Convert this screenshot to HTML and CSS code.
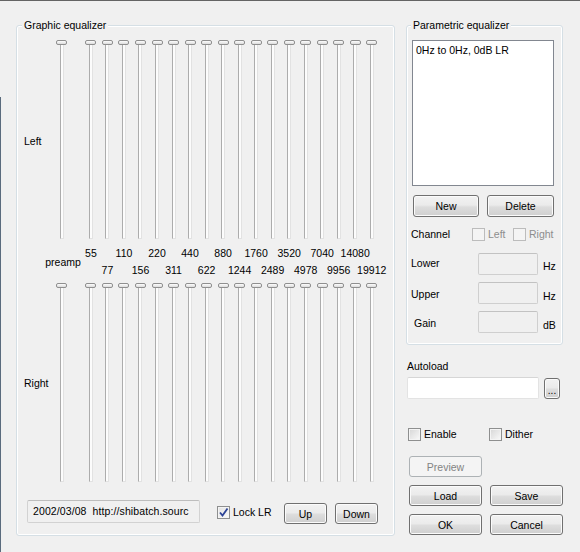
FILE: index.html
```html
<!DOCTYPE html>
<html>
<head>
<meta charset="utf-8">
<link rel="stylesheet" href="styles.css">
</head>
<body>
<div class="main">
  <section class="group geq">
    <span class="group-title">Graphic equalizer</span>
    <div class="eq">
      <div class="side top">Left</div>
      <div class="slider pre"><i class="thumb"></i><i class="track"></i></div>
      <div class="slider"><i class="thumb"></i><i class="track"></i></div>
      <div class="slider"><i class="thumb"></i><i class="track"></i></div>
      <div class="slider"><i class="thumb"></i><i class="track"></i></div>
      <div class="slider"><i class="thumb"></i><i class="track"></i></div>
      <div class="slider"><i class="thumb"></i><i class="track"></i></div>
      <div class="slider"><i class="thumb"></i><i class="track"></i></div>
      <div class="slider"><i class="thumb"></i><i class="track"></i></div>
      <div class="slider"><i class="thumb"></i><i class="track"></i></div>
      <div class="slider"><i class="thumb"></i><i class="track"></i></div>
      <div class="slider"><i class="thumb"></i><i class="track"></i></div>
      <div class="slider"><i class="thumb"></i><i class="track"></i></div>
      <div class="slider"><i class="thumb"></i><i class="track"></i></div>
      <div class="slider"><i class="thumb"></i><i class="track"></i></div>
      <div class="slider"><i class="thumb"></i><i class="track"></i></div>
      <div class="slider"><i class="thumb"></i><i class="track"></i></div>
      <div class="slider"><i class="thumb"></i><i class="track"></i></div>
      <div class="slider"><i class="thumb"></i><i class="track"></i></div>
      <div class="slider"><i class="thumb"></i><i class="track"></i></div>

      <div></div>
      <div class="flab pre">preamp</div>
      <div class="flab">55</div>
      <div class="flab lo">77</div>
      <div class="flab">110</div>
      <div class="flab lo">156</div>
      <div class="flab">220</div>
      <div class="flab lo">311</div>
      <div class="flab">440</div>
      <div class="flab lo">622</div>
      <div class="flab">880</div>
      <div class="flab lo">1244</div>
      <div class="flab">1760</div>
      <div class="flab lo">2489</div>
      <div class="flab">3520</div>
      <div class="flab lo">4978</div>
      <div class="flab">7040</div>
      <div class="flab lo">9956</div>
      <div class="flab">14080</div>
      <div class="flab lo">19912</div>

      <div class="side">Right</div>
      <div class="slider pre"><i class="thumb"></i><i class="track"></i></div>
      <div class="slider"><i class="thumb"></i><i class="track"></i></div>
      <div class="slider"><i class="thumb"></i><i class="track"></i></div>
      <div class="slider"><i class="thumb"></i><i class="track"></i></div>
      <div class="slider"><i class="thumb"></i><i class="track"></i></div>
      <div class="slider"><i class="thumb"></i><i class="track"></i></div>
      <div class="slider"><i class="thumb"></i><i class="track"></i></div>
      <div class="slider"><i class="thumb"></i><i class="track"></i></div>
      <div class="slider"><i class="thumb"></i><i class="track"></i></div>
      <div class="slider"><i class="thumb"></i><i class="track"></i></div>
      <div class="slider"><i class="thumb"></i><i class="track"></i></div>
      <div class="slider"><i class="thumb"></i><i class="track"></i></div>
      <div class="slider"><i class="thumb"></i><i class="track"></i></div>
      <div class="slider"><i class="thumb"></i><i class="track"></i></div>
      <div class="slider"><i class="thumb"></i><i class="track"></i></div>
      <div class="slider"><i class="thumb"></i><i class="track"></i></div>
      <div class="slider"><i class="thumb"></i><i class="track"></i></div>
      <div class="slider"><i class="thumb"></i><i class="track"></i></div>
      <div class="slider"><i class="thumb"></i><i class="track"></i></div>
    </div>
    <div class="eq-bottom">
      <div class="ro">2002/03/08  http://shibatch.sourc</div>
      <label class="chk lock"><span class="box checked"><svg width="11" height="11" viewBox="0 0 11 11"><path d="M2 5.5 L4.5 8.5 L9.5 1.5" fill="none" stroke="#2c4396" stroke-width="1.8"/></svg></span><span>Lock LR</span></label>
      <button class="btn ud">Up</button>
      <button class="btn ud down">Down</button>
    </div>
  </section>

  <div class="right">
    <section class="group peq">
      <span class="group-title">Parametric equalizer</span>
      <div class="list">0Hz to 0Hz, 0dB LR</div>
      <div class="btnrow">
        <button class="btn new">New</button>
        <button class="btn del">Delete</button>
      </div>
      <div class="chanrow">
        <span class="plabel chan">Channel</span>
        <label class="chk dis lchk"><span class="box"></span><span>Left</span></label>
        <label class="chk dis"><span class="box"></span><span>Right</span></label>
      </div>
      <div class="prow first">
        <span class="plabel p3">Lower</span>
        <span class="edit dis"></span>
        <span class="unit u6">Hz</span>
      </div>
      <div class="prow">
        <span class="plabel p5">Upper</span>
        <span class="edit dis"></span>
        <span class="unit u7">Hz</span>
      </div>
      <div class="prow">
        <span class="plabel p5 gain">Gain</span>
        <span class="edit dis"></span>
        <span class="unit u7">dB</span>
      </div>
    </section>

    <div class="autolabel">Autoload</div>
    <div class="autorow">
      <span class="edit wide"></span>
      <button class="btn dots">...</button>
    </div>
    <div class="optrow">
      <label class="chk enable"><span class="box"></span><span>Enable</span></label>
      <label class="chk"><span class="box"></span><span>Dither</span></label>
    </div>
    <div class="brow first"><button class="btn big disabled">Preview</button></div>
    <div class="brow"><button class="btn big">Load</button><button class="btn big">Save</button></div>
    <div class="brow"><button class="btn big">OK</button><button class="btn big">Cancel</button></div>
  </div>
</div>
</body>
</html>
```
FILE: styles.css
```css
* { box-sizing: border-box; }
html, body { margin: 0; }
body {
  width: 580px;
  height: 552px;
  overflow: hidden;
  background: #f0f0f0 linear-gradient(#5a6b7d, #5a6b7d) no-repeat 0 97px / 1px 455px;
  border-top: 1px solid #646464;
  font-family: "Liberation Sans", Arial, sans-serif;
  font-size: 10.5px;
  line-height: 14px;
  color: #000;
}
i { display: block; }

.main {
  display: flex;
  align-items: flex-start;
  padding: 24px 0 0 16px;
}

.group {
  position: relative;
  border: 1px solid #d5dfe5;
  border-radius: 3px;
  box-shadow: inset 0 0 0 1px #fff;
}
.group-title {
  position: absolute;
  top: -8px;
  left: 5px;
  padding: 0 2px;
  background: #f0f0f0;
  white-space: nowrap;
}

/* graphic equalizer */
.geq {
  width: 379px;
  height: 511px;
  padding: 14px 0 0 7px;
}
.eq {
  display: grid;
  grid-template-columns: 29px 29.7px repeat(18, 16.53px);
  grid-template-rows: 199px 44px 199px;
}
.side { padding-top: 93px; }
.side.top { padding-top: 94px; }

.slider {
  justify-self: center;
  width: 11px;
  display: flex;
  flex-direction: column;
  align-items: center;
}
.slider.pre { justify-self: start; margin-left: 3px; }
.thumb {
  width: 11px;
  height: 5px;
  border: 1px solid #8f8f8f;
  border-radius: 2px;
  background: linear-gradient(#fdfdfd, #dcdcdc);
}
.track {
  width: 4px;
  height: 194px;
  border-left: 1px solid #acacac;
  border-right: 1px solid #e2e2e2;
  border-bottom: 1px solid #e2e2e2;
  background: #fcfcfc;
}

.flab {
  display: flex;
  justify-content: center;
  padding-top: 7px;
  white-space: nowrap;
}
.flab.lo { padding-top: 24px; }
.flab.pre { width: 20px; padding-top: 16px; }

.eq-bottom {
  display: flex;
  align-items: flex-start;
  margin-top: 18px;
  padding-left: 3px;
}
.ro {
  width: 173px;
  height: 23px;
  border: 1px solid #d2d2d2;
  border-top-color: #bdbdbd;
  border-radius: 2px;
  padding: 3px 0 0 5px;
  white-space: pre;
  overflow: hidden;
  letter-spacing: 0.1px;
}

.chk {
  display: flex;
  align-items: center;
  gap: 3px;
  white-space: nowrap;
}
.box {
  width: 13px;
  height: 13px;
  flex: none;
  display: flex;
  align-items: center;
  justify-content: center;
  border: 1px solid #8e8f8f;
  box-shadow: inset 0 0 0 1px #f4f4f4;
  background: linear-gradient(135deg, #d6d6d6, #fafafa);
}
.box.checked { background: linear-gradient(135deg, #e2e2e2, #fafafa); }
.chk.dis { color: #8d8d8d; }
.chk.dis .box {
  border-color: #bcbcbc;
  background: #f4f4f4;
  box-shadow: none;
}
.lock {
  width: 67px;
  margin: 5px 0 0 17px;
}

.btn {
  font: inherit;
  color: #000;
  padding: 0;
  border: 1px solid #707070;
  border-radius: 3px;
  background: linear-gradient(#f2f2f2 0%, #ebebeb 45%, #dddddd 55%, #cfcfcf 100%);
  box-shadow: inset 0 0 0 1px #fbfbfb;
  display: flex;
  align-items: center;
  justify-content: center;
  line-height: 14px;
}
.ud { width: 43px; height: 21px; margin-top: 3px; }
.ud.down { margin-left: 8px; }
.btn.disabled {
  color: #838383;
  border-color: #adb2b5;
  background: #f4f4f4;
  box-shadow: none;
}

/* right column */
.right {
  margin-left: 11px;
  width: 157px;
}
.peq {
  width: 157px;
  height: 320px;
  padding: 14px 0 0 4px;
}
.peq .group-title { left: 4px; }
.list {
  width: 142px;
  height: 146px;
  margin-left: 1px;
  background: #fff;
  border: 1px solid #828790;
  padding: 2px 0 0 3px;
  white-space: nowrap;
}
.btnrow {
  display: flex;
  gap: 8px;
  margin-top: 9px;
  padding-left: 2px;
}
.btnrow .btn { height: 22px; }
.new { width: 66px; }
.del { width: 67px; }

.chanrow {
  display: flex;
  align-items: center;
  height: 14px;
  margin-top: 10px;
}
.plabel { width: 67px; flex: none; white-space: nowrap; }
.plabel.chan { width: 61px; }
.lchk { width: 41px; }

.prow {
  display: flex;
  align-items: flex-start;
  margin-top: 7px;
}
.prow.first { margin-top: 12px; }
.p3 { padding-top: 3px; }
.p5 { padding-top: 5px; }
.gain { padding-left: 3px; }
.edit {
  display: block;
  width: 60px;
  height: 22px;
  border: 1px solid #cfcfcf;
  border-top-color: #c2c2c2;
  border-radius: 2px;
  flex: none;
}
.edit.dis { background: #f0f0f0; }
.unit { margin-left: 5px; }
.u6 { padding-top: 6px; }
.u7 { padding-top: 7px; }

.autolabel {
  margin-top: 14px;
  padding-left: 1px;
}
.autorow {
  display: flex;
  align-items: flex-start;
  margin-top: 4px;
  padding-left: 1px;
}
.edit.wide {
  width: 132px;
  background: #fff;
  border-color: #e3e3e3;
  border-top-color: #d6d6d6;
}
.dots {
  width: 16px;
  height: 21px;
  margin: 1px 0 0 5px;
  padding-top: 4px;
  font-size: 10px;
}
.optrow {
  display: flex;
  margin-top: 28px;
  padding-left: 2px;
}
.enable { width: 81px; }

.brow {
  display: flex;
  gap: 8px;
  margin-top: 8px;
  padding-left: 3px;
}
.brow.first { margin-top: 15px; }
.big { width: 73px; height: 21px; }
```
